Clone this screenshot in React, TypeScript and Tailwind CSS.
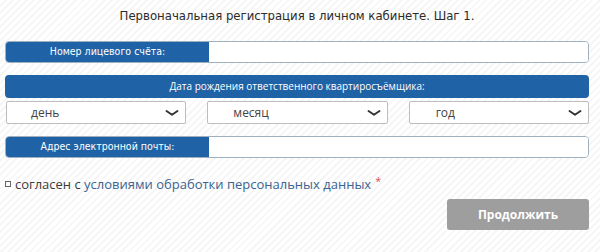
import React from 'react';

const Chevron = () => (
  <svg width="14" height="8" viewBox="0 0 14 8" className="shrink-0">
    <path d="M1.5 2 L7 5.8 L12.5 2" fill="none" stroke="#333" strokeWidth="1.9" strokeLinecap="round" strokeLinejoin="round" />
  </svg>
);

const LabeledInput = ({ label }: { label: string }) => (
  <div className="flex h-[22px] rounded-[4px] border border-[#9fb0bf] overflow-hidden bg-white">
    <div className="w-[203px] shrink-0 bg-[#1f62a5] text-white text-[10.5px] flex items-center justify-center font-['DejaVu_Sans_Condensed',sans-serif]">
      {label}
    </div>
    <input className="flex-1 bg-white outline-none px-2 text-[12px]" />
  </div>
);

const SelectBox = ({ text, pl }: { text: string; pl: string }) => (
  <div className={`h-[23px] rounded-[2px] border border-[#bdbdbd] bg-white flex items-center justify-between pr-[6px] ${pl}`}>
    <span className="text-[12px] text-[#444]">{text}</span>
    <Chevron />
  </div>
);

export default function App() {
  return (
    <div className="w-[600px] h-[252px] overflow-hidden bg-[repeating-linear-gradient(135deg,#ffffff_0px,#ffffff_3px,#f6f6f6_3px,#f6f6f6_5px)] font-['Open_Sans',sans-serif] text-[#333]">
      <div className="pl-[5px] pr-[11px] pt-[6px]">
        <h1 className="text-center text-[13px] leading-[20px] text-[#2b2b2b] font-['DejaVu_Sans_Condensed',sans-serif]">
          Первоначальная регистрация в личном кабинете. Шаг 1.
        </h1>

        <div className="mt-[15px]">
          <LabeledInput label="Номер лицевого счёта:" />
        </div>

        <div className="mt-[12px] h-[23px] rounded-[4px] bg-[#1f62a5] text-white text-[10px] flex items-center justify-center">
          Дата рождения ответственного квартиросъёмщика:
        </div>

        <div className="mt-[3px] grid grid-cols-3 gap-[21px] pl-[1px]">
          <SelectBox text="день" pl="pl-[24px]" />
          <SelectBox text="месяц" pl="pl-[25px]" />
          <SelectBox text="год" pl="pl-[26px]" />
        </div>

        <div className="mt-[12px]">
          <LabeledInput label="Адрес электронной почты:" />
        </div>

        <div className="mt-[17px] flex items-center text-[13px] leading-[18px] text-[#3a3a3a]">
          <span className="w-[6px] h-[6px] border border-[#666] mr-[4px] shrink-0" />
          <span>согласен с&nbsp;</span>
          <span className="text-[#3b6391]">условиями обработки персональных данных</span>
          <span className="text-[#d9534f] ml-[4px] self-start text-[11px] leading-[12px]">*</span>
        </div>

        <div className="mt-[6px] flex justify-end">
          <button className="w-[142px] h-[31px] rounded-[3px] bg-[#9e9e9e] text-white font-bold text-[12px] font-['Open_Sans',sans-serif]">
            Продолжить
          </button>
        </div>
      </div>
    </div>
  );
}
